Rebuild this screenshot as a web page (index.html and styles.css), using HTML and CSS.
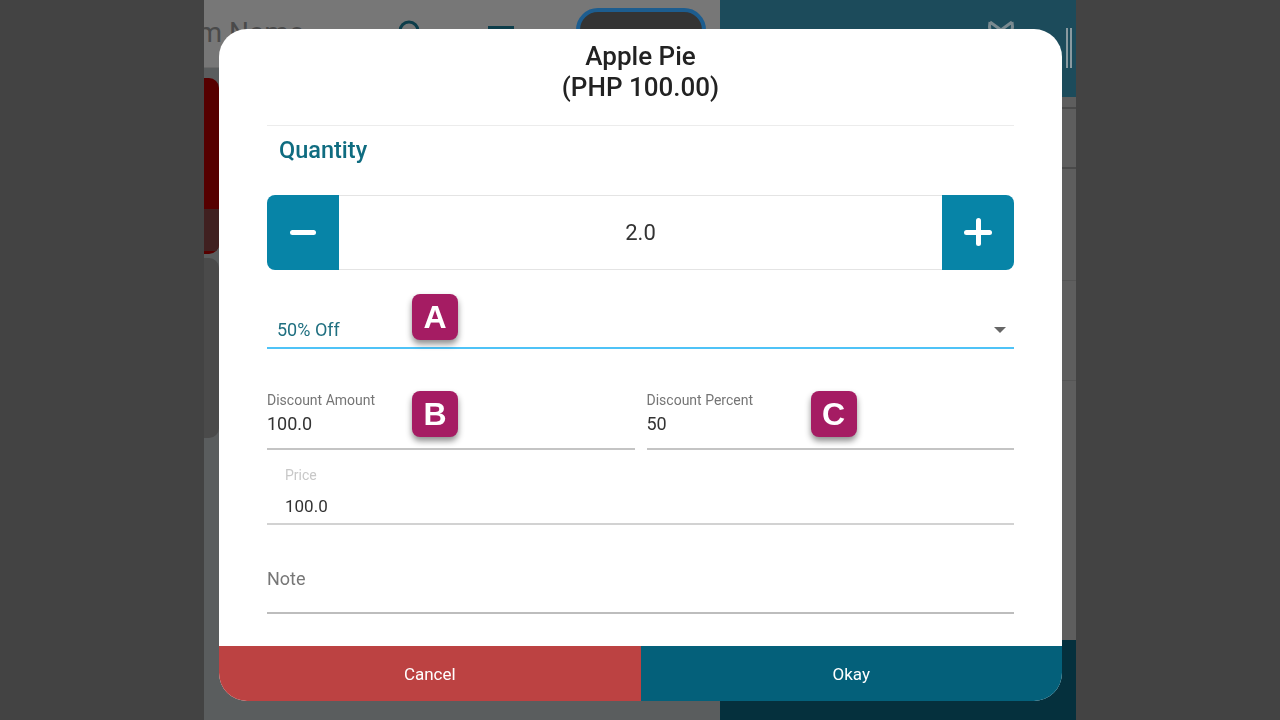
FILE: index.html
```html
<!DOCTYPE html>
<html>
<head>
<meta charset="utf-8">
<link rel="stylesheet" href="styles.css">
</head>
<body>
<div class="app">
  <div class="pane-left">
    <div class="topbar">
      <span class="topbar-title">Item Name</span>
      <svg class="tb-search" width="30" height="30" viewBox="0 0 30 30"><circle cx="13" cy="13" r="9" fill="none" stroke="#0d3d4a" stroke-width="3"/></svg>
      <span class="tb-menu"></span>
      <span class="tb-btn"></span>
    </div>
    <div class="left-body">
      <div class="red-card"><div class="red-card-bottom"></div></div>
      <div class="grey-card"></div>
    </div>
  </div>
  <div class="pane-right">
    <div class="rheader">
      <svg class="rh-icon" width="30" height="24" viewBox="0 0 30 24"><path d="M4 4 L15 12 L26 4 M4 4 Q2 14 8 16 L15 12 L22 16 Q28 14 26 4" fill="none" stroke="#7a8a90" stroke-width="3" stroke-linejoin="round"/></svg>
      <span class="rh-bars"></span>
    </div>
    <div class="rlist">
      <div class="rrow r1"></div>
      <div class="rrow r2"></div>
      <div class="rrow r3"></div>
      <div class="rrow r4"></div>
    </div>
    <div class="rfooter"></div>
  </div>
</div>

<div class="modal">
  <div class="modal-head">
    <div class="title">Apple Pie</div>
    <div class="title">(PHP 100.00)</div>
  </div>
  <div class="modal-body">
    <div class="section-label">Quantity</div>
    <div class="stepper">
      <button class="step minus"><span class="bar-h"></span></button>
      <div class="step-value">2.0</div>
      <button class="step plus"><span class="bar-h"></span><span class="bar-v"></span></button>
    </div>
    <div class="select">
      <span class="select-text">50% Off</span>
      <span class="caret"></span>
      <span class="badge badge-a">A</span>
    </div>
    <div class="row2">
      <div class="field">
        <div class="flabel">Discount Amount</div>
        <div class="fvalue">100.0</div>
        <span class="badge badge-b">B</span>
      </div>
      <div class="field">
        <div class="flabel">Discount Percent</div>
        <div class="fvalue">50</div>
        <span class="badge badge-c">C</span>
      </div>
    </div>
    <div class="field price">
      <div class="flabel light">Price</div>
      <div class="fvalue pv">100.0</div>
    </div>
    <div class="field note">
      <div class="placeholder">Note</div>
    </div>
  </div>
  <div class="modal-foot">
    <button class="fbtn cancel">Cancel</button>
    <button class="fbtn okay">Okay</button>
  </div>
</div>
</body>
</html>
```
FILE: styles.css
```css
* { box-sizing: border-box; }
html, body { margin: 0; padding: 0; }
body {
  width: 1280px; height: 720px; overflow: hidden;
  background: #434343;
  font-family: Roboto, "Liberation Sans", Arial, sans-serif;
  display: flex; justify-content: center;
}
.app {
  width: 872px; height: 720px; display: flex; overflow: hidden;
}
.pane-left { width: 516px; display: flex; flex-direction: column; background: #5a5d5e; overflow: hidden; }
.topbar {
  height: 68px; background: #777777; position: relative;
  border-bottom: 1px solid #6a6a6a; flex: none;
}
.topbar-title { position: absolute; left: -38px; top: 16px; font-size: 28px; color: #4a4a4a; white-space: nowrap; }
.tb-search { position: absolute; left: 192px; top: 18px; }
.tb-menu { position: absolute; left: 284px; top: 26px; width: 26px; height: 3px; background: #0d3d4a; box-shadow: 0 8px 0 #0d3d4a, 0 16px 0 #0d3d4a; }
.tb-btn { position: absolute; left: 372px; top: 8px; width: 130px; height: 50px; border-radius: 22px; background: #343434; border: 4px solid #1d5d8f; }
.left-body { flex: 1; padding-top: 10px; position: relative; }
.red-card { width: 40px; height: 176px; margin-left: -25px; background: #560000; border-radius: 10px; position: relative; overflow: hidden; }
.red-card-bottom { position: absolute; left: 0; right: 0; bottom: 3px; height: 42px; background: #402020; }
.grey-card { height: 180px; margin-top: 4px; width: 40px; background: #4a4a4a; border-radius: 10px; margin-left: -25px; }
.pane-right { width: 356px; display: flex; flex-direction: column; background: #5e5e5e; }
.rheader { height: 97px; background: #1c4b5b; position: relative; flex: none; }
.rh-icon { position: absolute; left: 266px; top: 18px; }
.rh-bars { position: absolute; left: 346px; top: 28px; width: 6px; height: 40px; border-left: 2px solid #8a9aa0; border-right: 2px solid #8a9aa0; }
.rlist { flex: 1; }
.rrow { border-bottom: 1px solid #4d4d4d; }
.r1 { height: 12px; border-bottom: 2px solid #4a4a4a; }
.r2 { height: 60px; border-bottom: 2px solid #4a4a4a; }
.r3 { height: 112px; border-bottom-color: #555; }
.r4 { height: 100px; border-bottom-color: #555; }
.rfooter { height: 80px; background: #05303d; flex: none; }

.modal {
  position: fixed; left: 219px; top: 29px; width: 843px; height: 672px;
  background: #fff; border-radius: 28px; overflow: hidden;
  display: flex; flex-direction: column;
}
.modal-head {
  margin: 0 48px; padding-top: 12px; padding-bottom: 22px;
  border-bottom: 1px solid #ececec; text-align: center;
}
.title { font-size: 26px; line-height: 31px; color: #222; font-weight: 500; }
.modal-body { flex: 1; padding: 0 48px; display: flex; flex-direction: column; }
.section-label {
  padding: 10px 0 0 12px; font-size: 23.5px; line-height: 28px; font-weight: 500; color: #0f6c80;
}
.stepper { margin-top: 31px; height: 75px; display: flex; }
.step {
  width: 72px; border: none; background: #0784a7; position: relative; padding: 0;
}
.minus { border-radius: 8px 0 0 8px; }
.plus { border-radius: 0 8px 8px 0; }
.bar-h { position: absolute; left: 23px; top: 35px; width: 26px; height: 5px; background: #fff; border-radius: 3px; }
.plus .bar-h { left: 22px; width: 28px; }
.bar-v { position: absolute; left: 33.5px; top: 23px; width: 5px; height: 28px; background: #fff; border-radius: 3px; }
.step-value {
  flex: 1; border: 1px solid #e4e4e4; border-left: none; border-right: none;
  display: flex; align-items: center; justify-content: center;
  font-size: 22px; color: #333;
}
.select {
  margin-top: 36px; height: 43px; position: relative;
  display: flex; align-items: center; padding: 6px 8px 0 10px;
  border-bottom: 2px solid #4fc3f7;
}
.select-text { flex: 1; font-size: 18px; color: #1f6f80; }
.caret { width: 0; height: 0; border-left: 6px solid transparent; border-right: 6px solid transparent; border-top: 6px solid #666; }
.badge {
  position: absolute; width: 46px; height: 46px; border-radius: 8px;
  background: #a51c63; color: #fff;
  font-family: "Liberation Sans", Arial, sans-serif; font-weight: bold; font-size: 32px;
  display: flex; align-items: center; justify-content: center;
  box-shadow: 0 4px 6px rgba(0,0,0,0.45);
}
.badge-a { left: 145px; top: -12px; }
.badge-b { left: 145px; top: 0; }
.badge-c { left: 164px; top: 0; }
.row2 { margin-top: 42px; display: flex; gap: 12px; }
.row2 .field { flex: 1; }
.field { position: relative; padding-bottom: 12px; border-bottom: 2px solid #c4c4c4; }
.flabel { font-size: 14px; line-height: 18px; color: #757575; }
.fvalue { margin-top: 3px; font-size: 18px; line-height: 24px; color: #333; }
.price { margin-top: 16px; padding-left: 18px; padding-bottom: 5px; border-bottom-color: #d2d2d2; }
.flabel.light { color: #c8c8c8; }
.pv { margin-top: 10px; font-size: 17px; }
.note { margin-top: 42px; padding-bottom: 21px; border-bottom-color: #bdbdbd; }
.placeholder { font-size: 18px; line-height: 24px; color: #777; }
.modal-foot { height: 55px; display: flex; }
.fbtn {
  flex: 1; border: none; color: #fff; font-family: Roboto, sans-serif; font-size: 17px;
}
.cancel { background: #bc4242; }
.okay { background: #04607a; }
```
